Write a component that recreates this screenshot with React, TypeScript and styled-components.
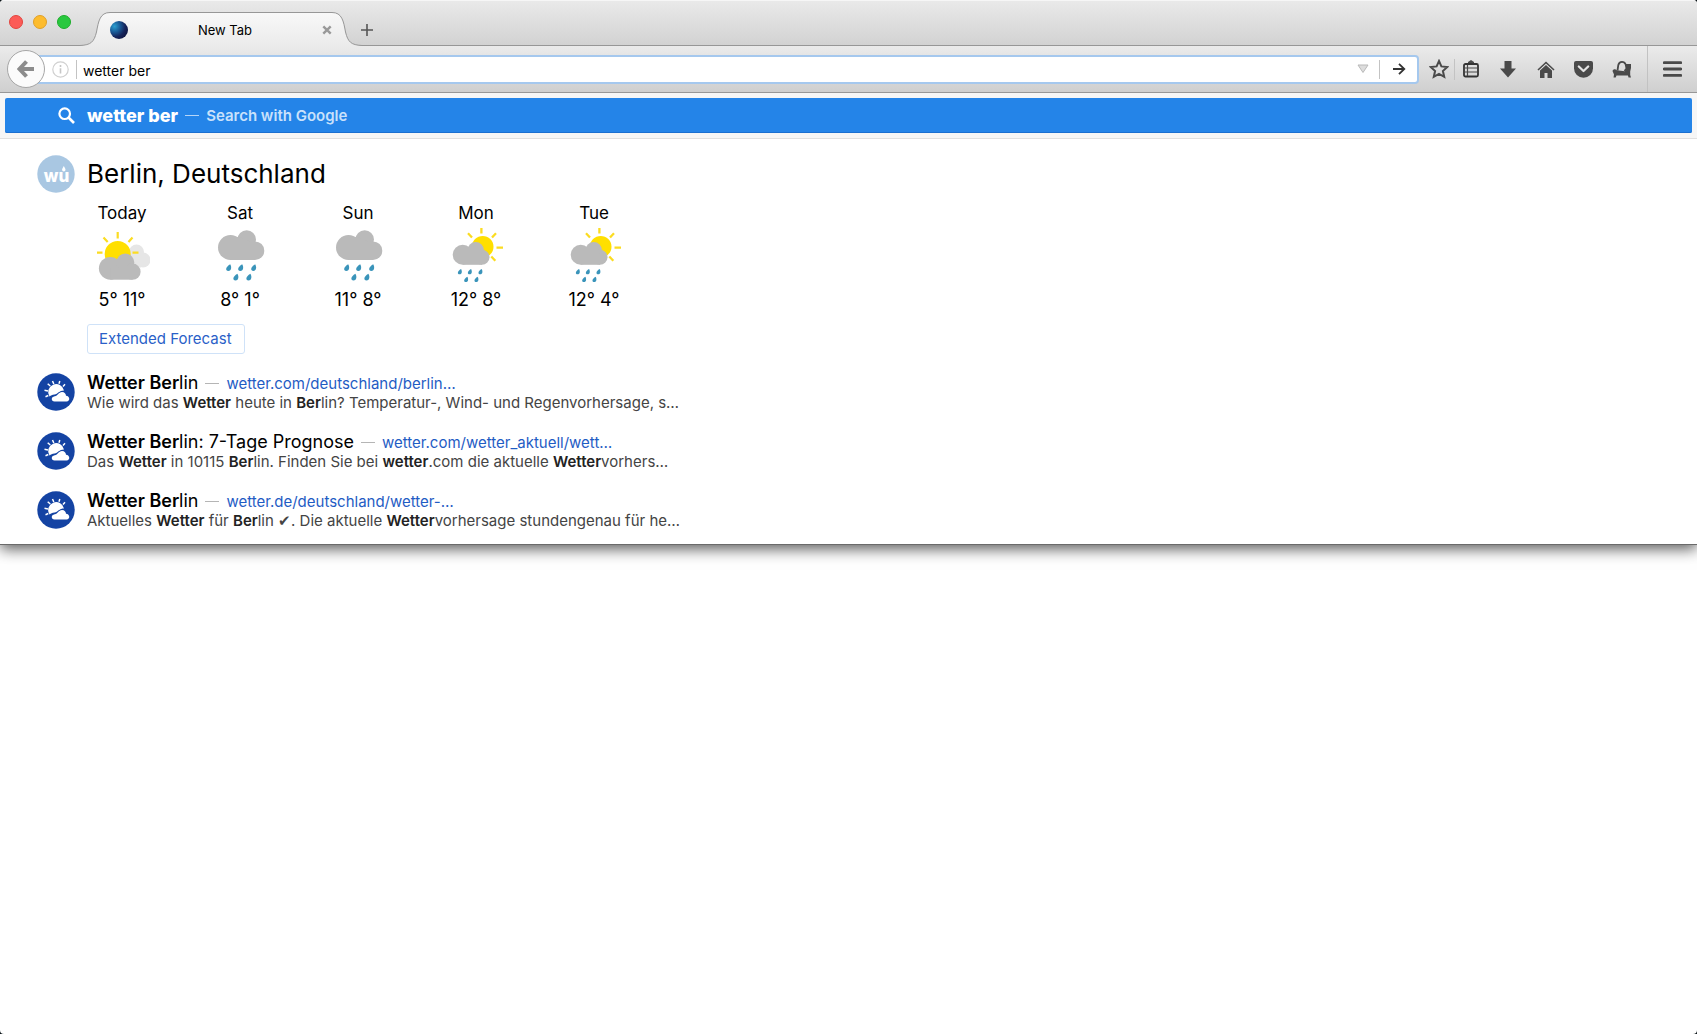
import React from "react";
import styled, { createGlobalStyle } from "styled-components";

const GlobalStyle = createGlobalStyle`
  * { box-sizing: border-box; }
  body {
    margin: 0;
    background: #0b1418;
    font-family: Inter, "Liberation Sans", sans-serif;
    color: #000;
  }
  button, input { font: inherit; color: inherit; margin: 0; }
  svg { display: block; flex: none; }
`;

const Window = styled.div`
  min-height: 100vh;
  background: #fff;
  border-radius: 4px;
  overflow: hidden;
`;

const TabStrip = styled.header`
  display: flex;
  align-items: flex-end;
  height: 46px;
  padding-left: 9px;
  border-top: 1px solid #f6f6f6;
  background: linear-gradient(#e9e9e9, #d2d2d2);
  box-shadow: inset 0 -1px #979797;
`;

const Lights = styled.div`
  display: flex;
  gap: 10px;
  align-self: flex-start;
  width: 71px;
  padding-top: 14px;
`;

const Light = styled.button<{ $fill: string; $edge: string }>`
  width: 14px;
  height: 14px;
  padding: 0;
  border: 1px solid ${(p) => p.$edge};
  border-radius: 50%;
  background: ${(p) => p.$fill};
`;

const Tab = styled.div`
  display: flex;
  height: 34px;
`;

const TabBody = styled.div`
  display: flex;
  align-items: center;
  width: 222px;
  border-top: 1px solid #979797;
  background: linear-gradient(#f8f8f8, #ebebeb);
`;

const TabTitle = styled.span`
  flex: 1;
  text-align: center;
  font-size: 13px;
  line-height: 16px;
`;

const PlainButton = styled.button`
  display: flex;
  align-items: center;
  justify-content: center;
  padding: 0;
  border: 0;
  background: none;
`;

const NewTabButton = styled(PlainButton)`
  width: 10px;
  height: 32px;
`;

const Toolbar = styled.nav`
  position: relative;
  z-index: 2;
  display: flex;
  align-items: center;
  height: 47px;
  padding-left: 7px;
  background: linear-gradient(#ebebeb, #cfcfcf);
  border-bottom: 1px solid #979797;
`;

const BackButton = styled(PlainButton)`
  position: relative;
  z-index: 1;
  width: 38px;
  height: 38px;
  border: 1px solid #a6a6a6;
  border-radius: 50%;
  background: #fbfbfb;
`;

const UrlBar = styled.form`
  display: flex;
  flex: 1;
  align-items: center;
  height: 29px;
  margin-left: -10px;
  padding: 0 11px 0 15px;
  border: 2px solid #a5c8ee;
  border-radius: 4px;
  background: #fff;
`;

const Divider = styled.span<{ $height?: number }>`
  width: 1px;
  height: ${(p) => p.$height ?? 19}px;
  background: #c3c3c3;
`;

const UrlInput = styled.input`
  flex: 1;
  min-width: 0;
  height: 24px;
  padding: 2px 6px 0;
  border: 0;
  outline: 0;
  background: none;
  font-size: 14px;
  line-height: 20px;
`;

const InfoIcon = styled.svg`
  margin-right: 7px;
`;

const DropButton = styled(PlainButton)`
  width: 33px;
  height: 24px;
`;

const GoButton = styled(PlainButton)`
  width: 26px;
  height: 24px;
  padding-left: 12px;
`;

const Actions = styled.div`
  display: flex;
  align-items: center;
  padding-left: 4px;
`;

const ToolButton = styled(PlainButton)<{ $width?: number }>`
  width: ${(p) => p.$width ?? 38}px;
  height: 32px;
`;

const MenuArea = styled.div`
  display: flex;
  align-items: center;
  height: 46px;
  margin-left: 10px;
  border-left: 1px solid #c2c2c2;
`;

const Popup = styled.main`
  background: #fff;
  border-bottom: 1px solid #6a6a6a;
  box-shadow: 0 4px 14px rgba(0, 0, 0, 0.65);
`;

const SearchWrap = styled.div`
  padding: 5px;
  background: #f6f6f6;
  border-bottom: 1px solid #e0e0e0;
`;

const SearchRow = styled.button`
  display: flex;
  align-items: center;
  width: 100%;
  height: 35px;
  padding: 0 0 0 53px;
  border: 0;
  border-radius: 2px;
  background: #2484e8;
  box-shadow: inset 0 -1px #1a6fd0;
  color: #fff;
  text-align: left;
`;

const Query = styled.strong`
  margin-left: 12px;
  font-size: 18px;
  font-weight: 800;
`;

const Dash = styled.span<{ $color: string }>`
  align-self: center;
  width: 14px;
  height: 1px;
  margin: 0 7px;
  background: ${(p) => p.$color};
`;

const Engine = styled.span`
  font-size: 15px;
  font-weight: 600;
  color: #c9e1fb;
`;

const Results = styled.div`
  display: flex;
  flex-direction: column;
  padding: 16px 16px 14px 37px;
`;

const Entry = styled.section`
  display: flex;
  gap: 12px;
`;

const Place = styled.h1`
  margin: 0;
  font-size: 26px;
  font-weight: 400;
  line-height: 38px;
`;

const Days = styled.ul`
  display: flex;
  gap: 48px;
  margin: 8px 0 12px;
  padding: 0;
  list-style: none;
`;

const Day = styled.li`
  display: flex;
  flex-direction: column;
  align-items: center;
  gap: 2px;
  width: 70px;
  font-size: 17px;
  line-height: 24px;
  white-space: nowrap;
`;

const Temps = styled.span`
  padding-top: 3px;
  font-size: 18px;
`;

const Forecast = styled.a`
  display: inline-block;
  padding: 0 12px 0 11px;
  border: 1px solid #cfe2f8;
  border-radius: 3px;
  font-size: 15px;
  line-height: 28px;
  color: #2a5fc8;
  text-decoration: none;
`;

const List = styled.ul`
  display: flex;
  flex-direction: column;
  gap: 19px;
  margin: 18px 0 0;
  padding: 0;
  list-style: none;
`;

const Item = styled.li`
  display: flex;
  gap: 12px;
  align-items: center;
  height: 40px;
`;

const ItemTitle = styled.div`
  display: flex;
  align-items: baseline;
  font-size: 18px;
  line-height: 21px;
  white-space: pre;
  b { font-weight: 600; }
`;

const ItemLink = styled.a`
  font-size: 15px;
  color: #1f5cc4;
  text-decoration: none;
`;

const ItemText = styled.p`
  margin: 0;
  font-size: 15px;
  line-height: 18px;
  color: #444;
  white-space: nowrap;
  b { font-weight: 600; color: #222; }
`;

const TabEdge = ({ flip }: { flip?: boolean }) => (
  <svg width="30" height="34" viewBox="0 0 30 34" transform={flip ? "scale(-1 1)" : undefined} aria-hidden>
    <defs>
      <linearGradient id="tabFill" x1="0" y1="0" x2="0" y2="1">
        <stop offset="0" stopColor="#f8f8f8" />
        <stop offset="1" stopColor="#ebebeb" />
      </linearGradient>
    </defs>
    <path d="M0 34V33.5C11 33 14 30 16.500 20C18.500 9 20 .5 30 .5V34Z" fill="url(#tabFill)" />
    <path d="M0 33.500C11 33 14 30 16.500 20C18.500 9 20 .5 30 .5" fill="none" stroke="#979797" />
  </svg>
);

type Shape = [number, number, number];

const Cloud = ({ parts, base, fill = "#bababa" }: { parts: Shape[]; base: number; fill?: string }) => {
  const [l, , r] = parts;
  return (
    <g fill={fill}>
      {parts.map(([x, y, rad], i) => <circle key={i} cx={x} cy={y} r={rad} />)}
      <rect x={l[0]} y={r[1] - 4} width={r[0] - l[0]} height={base - r[1] + 4} />
    </g>
  );
};

const Drops = ({ at, size }: { at: [number, number][]; size: number }) => (
  <g fill="#3a94ba">
    {at.map(([x, y], i) => (
      <path key={i} transform={`translate(${x} ${y}) scale(${size})`} d="M1.800-3.700C3.400-1 3.300 3.300-.2 3.400C-3.700 3.200-3.200-.8 1.800-3.700Z" />
    ))}
  </g>
);

const SunnyIcon = () => (
  <svg width="56" height="56" viewBox="-1 0 56 56" aria-hidden>
    <g fill="#e6e6e6"><circle cx="41.500" cy="25" r="7.500" /><circle cx="48" cy="33" r="7.500" /><path d="M34 27h12v13.500H34z" /></g>
    <circle cx="22.700" cy="27" r="13" fill="#ffdf00" />
    <path d="M22.700 5v6.500M8.500 10.500l4.200 4.500M37.500 10.500l-4 4.500M2 25.700h5.500M37.500 25.700h6" stroke="#fbdc22" strokeWidth="2.200" />
    <Cloud parts={[[15.3, 41.300, 11.400], [30.300, 35.500, 9], [37.500, 44.700, 8.100]]} base={52.700} />
  </svg>
);

const RainIcon = () => (
  <svg width="56" height="56" viewBox="-1 0 56 56" aria-hidden>
    <Cloud parts={[[17.500, 20.500, 12.500], [33.700, 12.500, 9.300], [42, 23.700, 9.300]]} base={33} />
    <path d="M17 10h10l14 6v14H17z" fill="#bababa" />
    <Drops size={0.95} at={[[15.500, 40.700], [27.500, 40.700], [40.500, 40.700], [22.700, 50.300], [35.700, 50.300]]} />
  </svg>
);

const MixedIcon = () => (
  <svg width="56" height="56" viewBox="-1 0 56 56" aria-hidden>
    <circle cx="33.700" cy="19.700" r="10.800" fill="#ffdf00" />
    <path d="M32.400 1v5.500M19 6.300l4 4.200M47 6.300l-4 4.200M47.500 20.700h6.500M42.300 29.500l4 4.200" stroke="#fbdc22" strokeWidth="2.300" />
    <Cloud parts={[[13.700, 27.800, 10], [26.700, 23.300, 8.300], [33, 30.300, 7.500]]} base={37.800} />
    <path d="M14 20h10l8 4v10H14z" fill="#bababa" />
    <Drops size={0.75} at={[[10.700, 44.700], [20.700, 44.700], [31.300, 44.700], [17, 52.500], [27.300, 52.500]]} />
  </svg>
);

const WuLogo = () => (
  <svg width="38" height="38" viewBox="0 0 38 38" role="img" aria-label="Weather Underground">
    <circle cx="19" cy="19" r="18.700" fill="#a9c7e2" />
    <text x="19.500" y="26.500" textAnchor="middle" fontSize="17" fontWeight="800" fill="#fff">wu</text>
    <path d="M26.800 11c1 1.800 1.700 2.700 1.700 3.700a1.700 1.700 0 0 1-3.400 0c0-1 .7-1.900 1.700-3.700Z" fill="#fff" />
  </svg>
);

const WetterLogo = () => (
  <svg width="38" height="38" viewBox="0 0 38 38" aria-hidden>
    <circle cx="19" cy="19" r="18.700" fill="#1443a3" />
    <path d="M12.500 23.500A8 8 0 1 1 27 17.500C22 17.500 21 21 17.500 21.500C15 21.800 14 22.500 12.500 23.500Z" fill="#fff" />
    <path d="M13.300 13l-2.600-2.300M16.800 11l-1.300-3M22 10.800l.8-2.800M26 13.500l2-2.200M11 18l-3.500-.7M11.300 22.500l-2.800 1.200" stroke="#fff" strokeWidth="1.500" />
    <path d="M17.500 28.500c-3.500-.2-3.800-4.600.3-5.200c3-.3 3.700-4.300 7.200-4.300c2.700 0 3.800 1.800 4 3.800c4.200.2 4.300 5.700.6 5.700Z" fill="#fff" />
  </svg>
);

const days = [
  { name: "Today", icon: SunnyIcon, temps: "5° 11°" },
  { name: "Sat", icon: RainIcon, temps: "8° 1°" },
  { name: "Sun", icon: RainIcon, temps: "11° 8°" },
  { name: "Mon", icon: MixedIcon, temps: "12° 8°" },
  { name: "Tue", icon: MixedIcon, temps: "12° 4°" },
];

const results = [
  {
    title: <><b>Wetter Ber</b>lin</>,
    link: "wetter.com/deutschland/berlin…",
    text: <>Wie wird das <b>Wetter</b> heute in <b>Ber</b>lin? Temperatur-, Wind- und Regenvorhersage, s…</>,
  },
  {
    title: <><b>Wetter Ber</b>lin: 7-Tage Prognose</>,
    link: "wetter.com/wetter_aktuell/wett…",
    text: <>Das <b>Wetter</b> in 10115 <b>Ber</b>lin. Finden Sie bei <b>wetter</b>.com die aktuelle <b>Wetter</b>vorhers…</>,
  },
  {
    title: <><b>Wetter Ber</b>lin</>,
    link: "wetter.de/deutschland/wetter-…",
    text: <>Aktuelles <b>Wetter</b> für <b>Ber</b>lin ✔. Die aktuelle <b>Wetter</b>vorhersage stundengenau für he…</>,
  },
];

export default function App() {
  return (
    <Window>
      <GlobalStyle />
      <TabStrip>
        <Lights>
          <Light $fill="#fc5b57" $edge="#e2453f" aria-label="Close window" />
          <Light $fill="#fdbc2e" $edge="#e0a028" aria-label="Minimize window" />
          <Light $fill="#29c83f" $edge="#1dad2b" aria-label="Zoom window" />
        </Lights>
        <Tab>
          <TabEdge />
          <TabBody>
            <svg width="18" height="18" viewBox="0 0 18 18" aria-hidden>
              <defs>
                <radialGradient id="globe" cx=".25" cy=".3" r=".8">
                  <stop offset="0" stopColor="#2a9fd0" />
                  <stop offset=".4" stopColor="#1a5a96" />
                  <stop offset=".75" stopColor="#15235a" />
                  <stop offset="1" stopColor="#101845" />
                </radialGradient>
              </defs>
              <circle cx="9" cy="9" r="9" fill="url(#globe)" />
            </svg>
            <TabTitle>New Tab</TabTitle>
            <PlainButton aria-label="Close tab">
              <svg width="10" height="10" viewBox="0 0 10 10"><path d="M1.300 1.300l7.400 7.400M8.700 1.300L1.300 8.700" stroke="#999" strokeWidth="2.400" /></svg>
            </PlainButton>
          </TabBody>
          <TabEdge flip />
        </Tab>
        <NewTabButton aria-label="Open a new tab">
          <svg width="12" height="12" viewBox="0 0 12 12"><path d="M6 0v12M0 6h12" stroke="#555" strokeWidth="1.600" /></svg>
        </NewTabButton>
      </TabStrip>

      <Toolbar>
        <BackButton aria-label="Back">
          <svg width="18" height="18" viewBox="0 0 18 18"><path d="M9.500 1.500L2.500 9l7 7.500M3 9h14" fill="none" stroke="#8c8c8c" strokeWidth="4" /></svg>
        </BackButton>
        <UrlBar onSubmit={(e) => e.preventDefault()}>
          <InfoIcon width="17" height="17" viewBox="0 0 17 17" aria-hidden>
            <circle cx="8.500" cy="8.500" r="7.700" fill="none" stroke="#d0d0d0" strokeWidth="1.200" />
            <path d="M8.500 7.200v5.300M8.500 4v2" stroke="#c6c6c6" strokeWidth="1.600" />
          </InfoIcon>
          <Divider />
          <UrlInput aria-label="Search or enter address" defaultValue="wetter ber" />
          <DropButton type="button" aria-label="Show history">
            <svg width="12" height="10" viewBox="0 0 12 10"><path d="M1 1h10L6 8.500Z" fill="#ddd" stroke="#b9b9b9" /></svg>
          </DropButton>
          <Divider />
          <GoButton aria-label="Go">
            <svg width="13" height="12" viewBox="0 0 13 12"><path d="M0 6h11.500M6 .8L11.300 6 6 11.200" fill="none" stroke="#333" strokeWidth="1.800" /></svg>
          </GoButton>
        </UrlBar>
        <Actions>
          <ToolButton $width={31} aria-label="Bookmark this page">
            <svg width="20" height="20" viewBox="0 0 20 20"><path d="M10 2l2.400 5.400 5.900.6-4.400 4 1.300 5.800L10 14.800 4.800 17.800 6.100 12 1.700 8l5.900-.6Z" fill="none" stroke="#4a4a4a" strokeWidth="2" /></svg>
          </ToolButton>
          <Divider $height={21} />
          <ToolButton $width={31} aria-label="Show bookmarks">
            <svg width="16" height="18" viewBox="0 0 16 18">
              <path d="M5 3.500V2l3-2 3 2v1.500Z" fill="#4a4a4a" />
              <rect x="1" y="4" width="14" height="12.500" rx="1.500" fill="none" stroke="#333" strokeWidth="1.800" />
              <path d="M2 8h12M2 12h12M4.500 5v11" stroke="#4a4a4a" strokeWidth="1.200" />
            </svg>
          </ToolButton>
          <ToolButton $width={44} aria-label="Downloads">
            <svg width="16" height="17" viewBox="0 0 16 17"><path d="M4.500 0h7v7.500H16L8 16.500 0 7.500h4.500Z" fill="#4a4a4a" /></svg>
          </ToolButton>
          <ToolButton $width={31} aria-label="Home">
            <svg width="18" height="17" viewBox="0 0 18 17">
              <path d="M1 9L9 1.500 17 9" fill="none" stroke="#4a4a4a" strokeWidth="1.600" />
              <path d="M3 9.500L9 4l6 5.500V17h-4.500v-5h-3v5H3Z" fill="#4a4a4a" />
            </svg>
          </ToolButton>
          <ToolButton $width={45} aria-label="Save to Pocket">
            <svg width="19" height="17" viewBox="0 0 19 17">
              <path d="M2 0h15a2 2 0 0 1 2 2v5.500a9.500 9.300 0 0 1-19 0V2a2 2 0 0 1 2-2Z" fill="#4a4a4a" />
              <path d="M4.800 5.500l4.700 4.500 4.700-4.500" fill="none" stroke="#e4e4e4" strokeWidth="2.300" strokeLinecap="round" strokeLinejoin="round" />
            </svg>
          </ToolButton>
          <ToolButton $width={31} aria-label="Cliqz">
            <svg width="20" height="18" viewBox="0 0 20 18">
              <path d="M5.500 10.500L6.300 5C6.800 2.800 8 1.800 10 1.800S13 2.800 13.700 4.500L14.500 8.500L12.500 11" fill="none" stroke="#4a4a4a" strokeWidth="1.800" />
              <path d="M13.500 4H19V8l-.8 3.500V15l.8 2.500h-2.500L16 15.500H4.500l-.8 2H1.500L2 14.500L.5 11C1 9 3.500 8.500 4.800 10.300l8.200.9 1.500-2.500Z" fill="#4a4a4a" />
            </svg>
          </ToolButton>
          <MenuArea>
            <ToolButton $width={49} aria-label="Open menu">
              <svg width="19" height="16" viewBox="0 0 19 16"><path d="M1.200 1.700h16.600M1.200 8h16.600M1.200 14.300h16.600" stroke="#4a4a4a" strokeWidth="2.800" strokeLinecap="round" /></svg>
            </ToolButton>
          </MenuArea>
        </Actions>
      </Toolbar>

      <Popup>
        <SearchWrap>
          <SearchRow>
            <svg width="17" height="17" viewBox="0 0 17 17" aria-hidden>
              <circle cx="6.700" cy="6.700" r="5.300" fill="none" stroke="#fff" strokeWidth="2.200" />
              <path d="M10.500 10.500l5.500 5.500" stroke="#fff" strokeWidth="2.600" />
            </svg>
            <Query>wetter ber</Query>
            <Dash $color="#b5d5f8" />
            <Engine>Search with Google</Engine>
          </SearchRow>
        </SearchWrap>
        <Results>
          <Entry>
            <WuLogo />
            <div>
              <Place>Berlin, Deutschland</Place>
              <Days>
                {days.map(({ name, icon: Icon, temps }) => (
                  <Day key={name}>
                    <span>{name}</span>
                    <Icon />
                    <Temps>{temps}</Temps>
                  </Day>
                ))}
              </Days>
              <Forecast href="#forecast">Extended Forecast</Forecast>
            </div>
          </Entry>
          <List>
            {results.map((r, i) => (
              <Item key={i}>
                <WetterLogo />
                <div>
                  <ItemTitle>
                    <span>{r.title}</span>
                    <Dash $color="#b5b5b5" />
                    <ItemLink href={`#result-${i + 1}`}>{r.link}</ItemLink>
                  </ItemTitle>
                  <ItemText>{r.text}</ItemText>
                </div>
              </Item>
            ))}
          </List>
        </Results>
      </Popup>
    </Window>
  );
}
